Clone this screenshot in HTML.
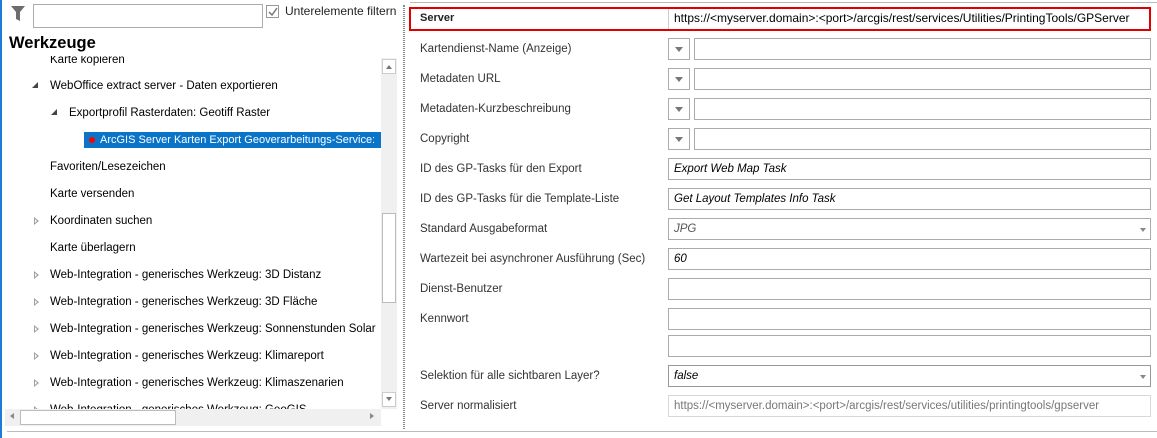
<!DOCTYPE html>
<html><head><meta charset="utf-8"><style>
*{box-sizing:border-box;margin:0;padding:0}
body{width:1157px;height:438px;background:#fff;position:relative;overflow:hidden;font-family:"Liberation Sans",sans-serif;font-size:11.5px;color:#000}
.a{position:absolute;white-space:nowrap}
.tr{position:absolute;white-space:nowrap;line-height:16px}
.lbl{position:absolute;left:420px;color:#333;line-height:16px;white-space:nowrap}
.inp{position:absolute;left:668px;width:483px;height:22px;border:1px solid #ababab;background:#fff;font-style:italic;padding-left:5px;line-height:20px}
.dd{position:absolute;left:668px;width:22px;height:22px;border:1px solid #ababab}
.dd:after{content:"";position:absolute;left:6px;top:8px;border-left:4px solid transparent;border-right:4px solid transparent;border-top:5px solid #777}
.dt{position:absolute;left:694px;width:457px;height:22px;border:1px solid #ababab}
.arr{position:absolute;right:4px;top:9px;border-left:3px solid transparent;border-right:3px solid transparent;border-top:4px solid #888}
.exp{position:absolute;width:0;height:0;border-top:4px solid transparent;border-bottom:4px solid transparent;border-left:5px solid #a0a0a0}
.exp:after{content:"";position:absolute;left:-4px;top:-2px;border-top:2px solid transparent;border-bottom:2px solid transparent;border-left:2px solid #fff}
.open{position:absolute;width:0;height:0;border-left:6px solid transparent;border-bottom:6px solid #444}
</style></head><body>
<div class="a" style="left:0;top:0;width:2px;height:438px;background:#1e7bd6"></div>
<svg class="a" style="left:11px;top:6px" width="15" height="16"><path d="M0 0H14L9 6V15L5 13V6Z" fill="#6d6d6d"/></svg>
<div class="a" style="left:33px;top:4px;width:230px;height:24px;border:1px solid #ababab"></div>
<div class="a" style="left:266px;top:5px;width:13px;height:13px;border:1px solid #999"></div>
<svg class="a" style="left:268px;top:7px" width="10" height="10"><path d="M1 5L4 8L9 1" stroke="#777" stroke-width="1.5" fill="none"/></svg>
<div class="a" style="left:285px;top:4px;font-size:12px;color:#222">Unterelemente filtern</div>
<div class="a" style="left:9px;top:34px;font-size:16.5px;font-weight:bold">Werkzeuge</div>
<div class="a" style="left:5px;top:56px;width:376px;height:353px;overflow:hidden">
 <div class="tr" style="left:45px;top:-4px">Karte kopieren</div>
 <div class="open" style="left:27px;top:26px"></div>
 <div class="tr" style="left:45px;top:22px">WebOffice extract server - Daten exportieren</div>
 <div class="open" style="left:46px;top:53px"></div>
 <div class="tr" style="left:64px;top:49px">Exportprofil Rasterdaten: Geotiff Raster</div>
 <div class="a" style="left:79px;top:76px;width:297px;height:16px;background:#0a74c9;overflow:hidden">
  <div class="a" style="left:5px;top:5px;width:6px;height:6px;border-radius:3px;background:#f00"></div>
  <div class="tr" style="left:16px;top:0;color:#fff;font-size:11px">ArcGIS Server Karten Export Geoverarbeitungs-Service:</div>
 </div>
 <div class="tr" style="left:45px;top:103px">Favoriten/Lesezeichen</div>
 <div class="tr" style="left:45px;top:130px">Karte versenden</div>
 <div class="exp" style="left:29px;top:161px"></div>
 <div class="tr" style="left:45px;top:157px">Koordinaten suchen</div>
 <div class="tr" style="left:45px;top:184px">Karte überlagern</div>
 <div class="exp" style="left:29px;top:215px"></div>
 <div class="tr" style="left:45px;top:211px">Web-Integration - generisches Werkzeug: 3D Distanz</div>
 <div class="exp" style="left:29px;top:242px"></div>
 <div class="tr" style="left:45px;top:238px">Web-Integration - generisches Werkzeug: 3D Fläche</div>
 <div class="exp" style="left:29px;top:269px"></div>
 <div class="tr" style="left:45px;top:265px">Web-Integration - generisches Werkzeug: Sonnenstunden Solar</div>
 <div class="exp" style="left:29px;top:296px"></div>
 <div class="tr" style="left:45px;top:292px">Web-Integration - generisches Werkzeug: Klimareport</div>
 <div class="exp" style="left:29px;top:323px"></div>
 <div class="tr" style="left:45px;top:319px">Web-Integration - generisches Werkzeug: Klimaszenarien</div>
 <div class="exp" style="left:29px;top:350px"></div>
 <div class="tr" style="left:45px;top:346px">Web-Integration - generisches Werkzeug: GeoGIS</div>
</div>
<div class="a" style="left:381px;top:58px;width:16px;height:351px;background:#f0f0f0"></div>
<div class="a" style="left:382px;top:59px;width:14px;height:15px;border:1px solid #ccc;background:#fff"></div>
<div class="a" style="left:386px;top:65px;border-left:3px solid transparent;border-right:3px solid transparent;border-bottom:4px solid #777"></div>
<div class="a" style="left:382px;top:213px;width:14px;height:90px;border:1px solid #bbb;background:#fff"></div>
<div class="a" style="left:382px;top:392px;width:14px;height:15px;border:1px solid #ccc;background:#fff"></div>
<div class="a" style="left:386px;top:397px;border-left:3px solid transparent;border-right:3px solid transparent;border-top:4px solid #777"></div>
<div class="a" style="left:5px;top:409px;width:376px;height:17px;background:#f0f0f0"></div>
<div class="a" style="left:10px;top:413px;border-top:3px solid transparent;border-bottom:3px solid transparent;border-right:4px solid #888"></div>
<div class="a" style="left:20px;top:410px;width:156px;height:15px;border:1px solid #bbb;background:#fff"></div>
<div class="a" style="left:370px;top:413px;border-top:3px solid transparent;border-bottom:3px solid transparent;border-left:4px solid #888"></div>
<div class="a" style="left:403px;top:5px;width:2px;height:424px;border-left:1px dotted #888;border-right:1px dotted #888"></div>
<div class="a" style="left:7px;top:431px;width:1150px;height:1px;background:#bbb"></div>
<div class="a" style="left:410px;top:2px;width:747px;height:1px;background:#bbb"></div>

<div class="a" style="left:409px;top:7px;width:742px;height:24px;border:2px solid #e00000"></div>
<div class="a" style="left:668px;top:9px;width:1px;height:20px;background:#ccc"></div>
<div class="lbl" style="top:10px;color:#222;font-weight:bold;font-size:11px">Server</div>
<div class="a" style="left:674px;top:11px;font-size:12px">https://&lt;myserver.domain&gt;:&lt;port&gt;/arcgis/rest/services/Utilities/PrintingTools/GPServer</div>

<div class="lbl" style="top:41px">Kartendienst-Name (Anzeige)</div><div class="dd" style="top:38px"></div><div class="dt" style="top:38px"></div>
<div class="lbl" style="top:71px">Metadaten URL</div><div class="dd" style="top:68px"></div><div class="dt" style="top:68px"></div>
<div class="lbl" style="top:101px">Metadaten-Kurzbeschreibung</div><div class="dd" style="top:98px"></div><div class="dt" style="top:98px"></div>
<div class="lbl" style="top:131px">Copyright</div><div class="dd" style="top:128px"></div><div class="dt" style="top:128px"></div>
<div class="lbl" style="top:161px">ID des GP-Tasks für den Export</div><div class="inp" style="top:158px">Export Web Map Task</div>
<div class="lbl" style="top:191px">ID des GP-Tasks für die Template-Liste</div><div class="inp" style="top:188px">Get Layout Templates Info Task</div>
<div class="lbl" style="top:221px">Standard Ausgabeformat</div><div class="inp" style="top:218px;color:#555">JPG<span class="arr"></span></div>
<div class="lbl" style="top:251px">Wartezeit bei asynchroner Ausführung (Sec)</div><div class="inp" style="top:248px">60</div>
<div class="lbl" style="top:281px">Dienst-Benutzer</div><div class="inp" style="top:278px"></div>
<div class="lbl" style="top:311px">Kennwort</div><div class="inp" style="top:308px"></div>
<div class="inp" style="top:335px"></div>
<div class="lbl" style="top:368px">Selektion für alle sichtbaren Layer?</div><div class="inp" style="top:365px;border-color:#999">false<span class="arr"></span></div>
<div class="lbl" style="top:398px">Server normalisiert</div><div class="inp" style="top:395px;border-color:#d8d8d8;color:#777;font-style:normal">https://&lt;myserver.domain&gt;:&lt;port&gt;/arcgis/rest/services/utilities/printingtools/gpserver</div>
</body></html>
